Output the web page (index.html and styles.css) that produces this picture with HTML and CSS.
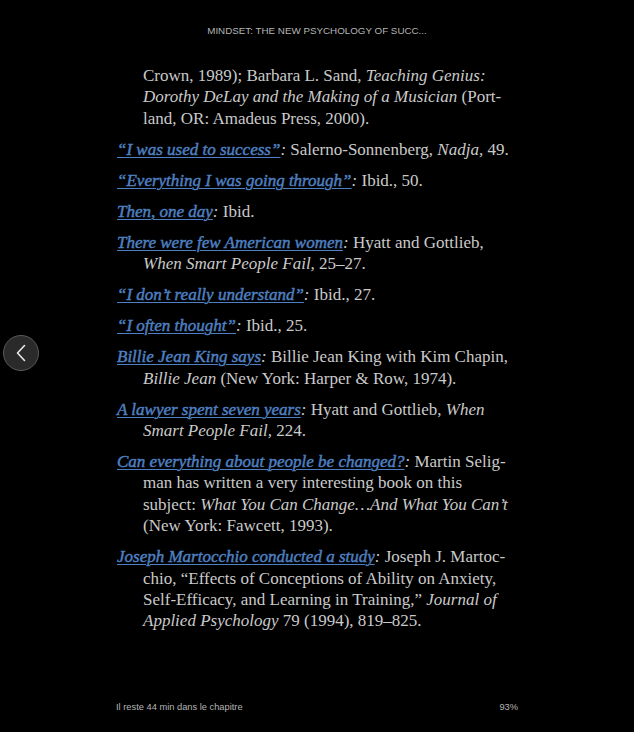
FILE: index.html
```html
<!DOCTYPE html>
<html>
<head>
<meta charset="utf-8">
<link rel="stylesheet" href="styles.css">
</head>
<body>
<div class="page">
  <header class="title">MINDSET: THE NEW PSYCHOLOGY OF SUCC...</header>
  <main class="notes">
    <p class="note cont">Crown, 1989); Barbara L. Sand, <i>Teaching Genius:</i><br><i>Dorothy DeLay and the Making of a Musician</i> (Port-<br>land, OR: Amadeus Press, 2000).</p>
    <p class="note"><a href="#">“I was used to success”</a><i>:</i> Salerno-Sonnenberg, <i>Nadja,</i> 49.</p>
    <p class="note"><a href="#">“Everything I was going through”</a><i>:</i> Ibid., 50.</p>
    <p class="note"><a href="#">Then, one day</a><i>:</i> Ibid.</p>
    <p class="note"><a href="#">There were few American women</a><i>:</i> Hyatt and Gottlieb,<br><i>When Smart People Fail,</i> 25–27.</p>
    <p class="note"><a href="#">“I don’t really understand”</a><i>:</i> Ibid., 27.</p>
    <p class="note"><a href="#">“I often thought”</a><i>:</i> Ibid., 25.</p>
    <p class="note"><a href="#">Billie Jean King says</a><i>:</i> Billie Jean King with Kim Chapin,<br><i>Billie Jean</i> (New York: Harper &amp; Row, 1974).</p>
    <p class="note"><a href="#">A lawyer spent seven years</a><i>:</i> Hyatt and Gottlieb, <i>When</i><br><i>Smart People Fail,</i> 224.</p>
    <p class="note"><a href="#">Can everything about people be changed?</a><i>:</i> Martin Selig-<br>man has written a very interesting book on this<br>subject: <i>What You Can Change…And What You Can’t</i><br>(New York: Fawcett, 1993).</p>
    <p class="note"><a href="#">Joseph Martocchio conducted a study</a><i>:</i> Joseph J. Martoc-<br>chio, “Effects of Conceptions of Ability on Anxiety,<br>Self-Efficacy, and Learning in Training,” <i>Journal of</i><br><i>Applied Psychology</i> 79 (1994), 819–825.</p>
  </main>
  <footer class="status">
    <span>Il reste 44 min dans le chapitre</span>
    <span>93%</span>
  </footer>
  <button class="back" aria-label="Précédent">
    <svg width="14" height="20" viewBox="0 0 14 20"><path d="M10.5 2.5 L3.5 10 L10.5 17.5" fill="none" stroke="#e8e8e8" stroke-width="1.6" stroke-linecap="round" stroke-linejoin="round"/></svg>
  </button>
</div>
</body>
</html>
```

FILE: styles.css
```css
html, body {
  margin: 0;
  padding: 0;
  background: #000;
}
.page {
  position: relative;
  width: 634px;
  height: 732px;
  display: flex;
  flex-direction: column;
  overflow: hidden;
}
.title {
  font-family: "Liberation Sans", Arial, sans-serif;
  font-size: 9.8px;
  line-height: 12px;
  color: #b4b4b4;
  text-align: center;
  padding-top: 25px;
  height: 65px;
  box-sizing: border-box;
}
.notes {
  flex: 1;
  padding-left: 117px;
  width: 400px;
  font-family: "Liberation Serif", "Times New Roman", serif;
  font-size: 17px;
  line-height: 21.4px;
  color: #cacaca;
}
.note {
  margin: 0 0 9.6px 0;
  padding-left: 26px;
  text-indent: -26px;
  white-space: nowrap;
}
.note.cont {
  text-indent: 0;
}
.note i {
  font-style: italic;
}
.note a {
  color: #4f80c2;
  font-style: italic;
  font-weight: normal;
  -webkit-text-stroke: 0.45px #4f80c2;
  text-decoration: underline;
  text-decoration-thickness: 1px;
  text-underline-offset: 2px;
}
.status {
  display: flex;
  justify-content: space-between;
  padding: 0 116px 20px 116px;
  font-family: "Liberation Sans", Arial, sans-serif;
  font-size: 9.3px;
  color: #b4b4b4;
}
.back {
  position: absolute;
  left: 3px;
  top: 335px;
  width: 36px;
  height: 36px;
  border-radius: 50%;
  background: #2a2a2a;
  border: 1px solid #5a5a5a;
  display: flex;
  align-items: center;
  justify-content: center;
  padding: 0;
}
```
